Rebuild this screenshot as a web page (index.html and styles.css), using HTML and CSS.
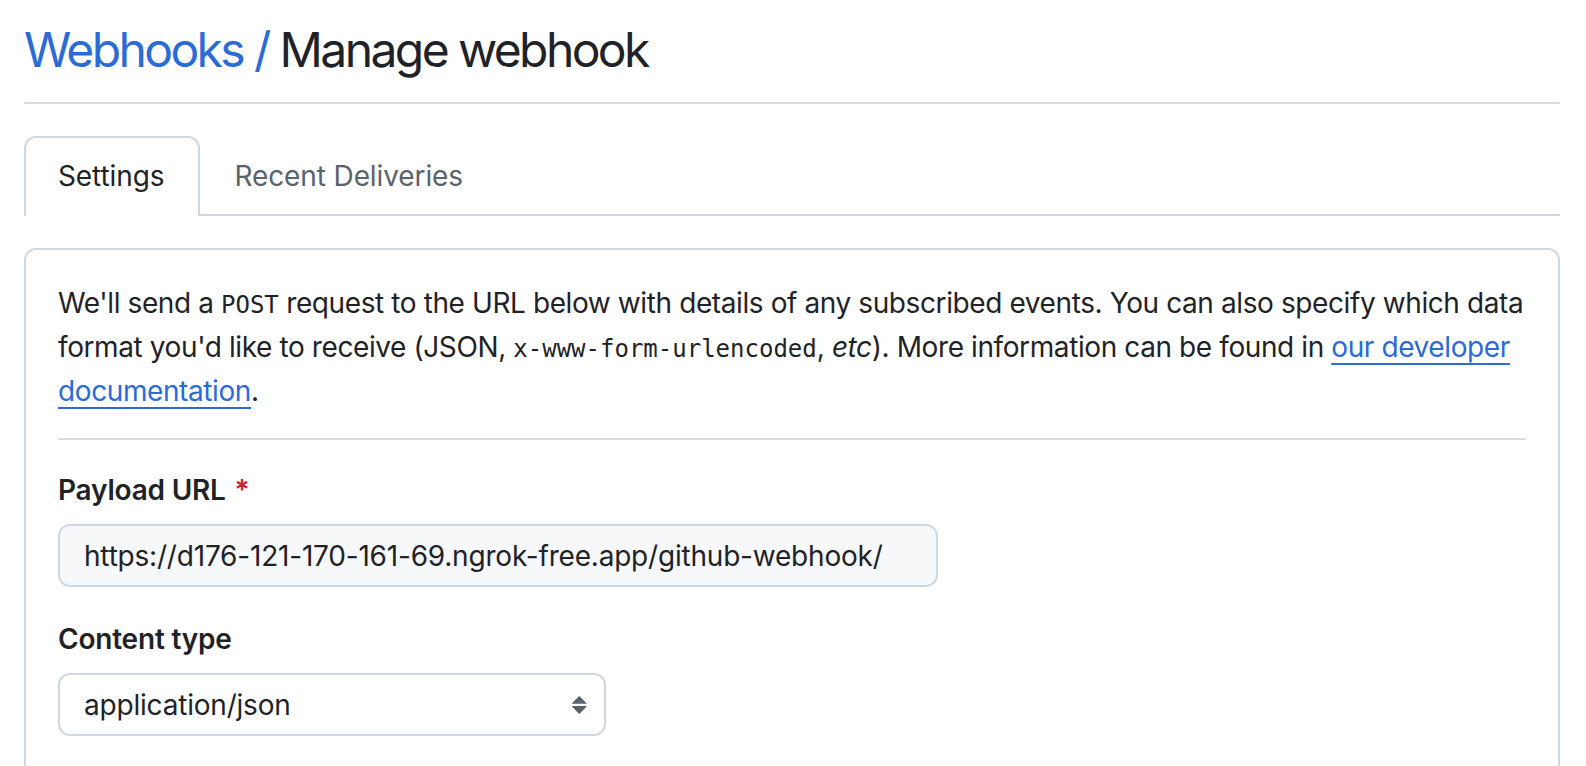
FILE: index.html
```html
<!DOCTYPE html>
<html lang="en">
<head>
<meta charset="utf-8">
<title>Manage webhook</title>
<link rel="stylesheet" href="styles.css">
</head>
<body>
<div class="page">
  <div class="subhead">
    <h2 class="subhead-heading"><a class="crumb" href="#">Webhooks</a><span class="sep"> / </span>Manage webhook</h2>
  </div>

  <nav class="tabnav">
    <a class="tab selected" href="#">Settings</a>
    <a class="tab" href="#">Recent Deliveries</a>
  </nav>

  <div class="box">
    <p class="intro">We'll send a <code>POST</code> request to the URL below with details of any subscribed events. You can also specify which data format you'd like to receive (JSON, <code>x-www-form-urlencoded</code>, <em>etc</em>). More information can be found in <a class="link" href="#">our developer documentation</a>.</p>
    <div class="divider"></div>

    <div class="form-group">
      <label class="label" for="url">Payload URL <span class="req">*</span></label>
      <input class="input url" id="url" type="text" value="https://d176-121-170-161-69.ngrok-free.app/github-webhook/">
    </div>

    <div class="form-group">
      <label class="label" for="ctype">Content type</label>
      <div class="select-wrap">
        <select class="select" id="ctype">
          <option>application/json</option>
        </select>
        <svg class="select-arrow" width="32" height="32" viewBox="0 0 16 16" aria-hidden="true"><path fill="#59636e" d="m4.074 9.427 3.396 3.396a.25.25 0 0 0 .354 0l3.396-3.396A.25.25 0 0 0 11.043 9H4.251a.25.25 0 0 0-.177.427ZM4.074 7.47 7.47 4.073a.25.25 0 0 1 .354 0L11.22 7.47a.25.25 0 0 1-.177.426H4.251a.25.25 0 0 1-.177-.426Z"/></svg>
      </div>
    </div>
  </div>
</div>
</body>
</html>
```

FILE: styles.css
```css
* { box-sizing: border-box; }

html, body {
  margin: 0;
  padding: 0;
  background: #ffffff;
}

body {
  font-family: Inter, "Noto Sans", "Liberation Sans", sans-serif;
  font-size: 28px;
  line-height: 42px;
  letter-spacing: -0.4px;
  color: #1f2328;
  overflow: hidden;
}

.page {
  padding: 0 26px 0 24px;
}

.subhead {
  padding-top: 20px;
  padding-bottom: 22px;
  border-bottom: 2px solid #d8dee4;
  margin-bottom: 32px;
}

.subhead-heading {
  margin: 0;
  font-size: 48px;
  line-height: 60px;
  font-weight: 400;
  letter-spacing: -2.6px;
  color: #1f2328;
}

.crumb, .sep {
  color: #2a6bd7;
  text-decoration: none;
}

.tabnav {
  display: flex;
  border-bottom: 2px solid #d0d7de;
  margin-bottom: 32px;
}

.tab {
  display: block;
  padding: 16px 32px;
  line-height: 44px;
  letter-spacing: -0.1px;
  border: 2px solid transparent;
  border-bottom: 0;
  border-radius: 12px 12px 0 0;
  color: #59636e;
  text-decoration: none;
  margin-bottom: -2px;
  background: transparent;
}

.tab.selected {
  color: #1f2328;
  border-color: #d0d7de;
  background: #ffffff;
  padding-right: 34px;
  padding-bottom: 18px;
}

.box {
  border: 2px solid #d0d7de;
  border-bottom: 0;
  border-radius: 12px 12px 0 0;
  padding: 32px 32px 60px;
}

.intro {
  margin: 0 -4px 26px 0;
}

code {
  font-family: "DejaVu Sans Mono", "Liberation Mono", monospace;
  font-size: 24px;
  letter-spacing: 0;
}

em { font-style: italic; }

.link {
  color: #2a6bd7;
  text-decoration: underline;
  text-underline-offset: 6px;
  text-decoration-thickness: 2px;
}

.divider {
  height: 2px;
  background: #d8dee4;
}

.form-group {
  margin-top: 29px;
}

.form-group + .form-group {
  margin-top: 31px;
}

.label {
  display: block;
  font-weight: 600;
  letter-spacing: -0.2px;
  margin-bottom: 13px;
}

.req {
  color: #cf222e;
  margin-left: 2px;
}

.input, .select {
  display: block;
  font-family: inherit;
  font-size: 28px;
  letter-spacing: -0.2px;
  line-height: 40px;
  color: #1f2328;
  height: 63px;
  padding: 0 24px;
  border: 2px solid #d0d7de;
  border-radius: 12px;
  outline: none;
}

.input.url {
  width: 880px;
  background: #f6f8fa;
}

.select-wrap {
  position: relative;
  width: 548px;
}

.select {
  width: 548px;
  appearance: none;
  -webkit-appearance: none;
  background: #ffffff;
}

.select-arrow {
  position: absolute;
  right: 10px;
  top: 15px;
  pointer-events: none;
}
```
